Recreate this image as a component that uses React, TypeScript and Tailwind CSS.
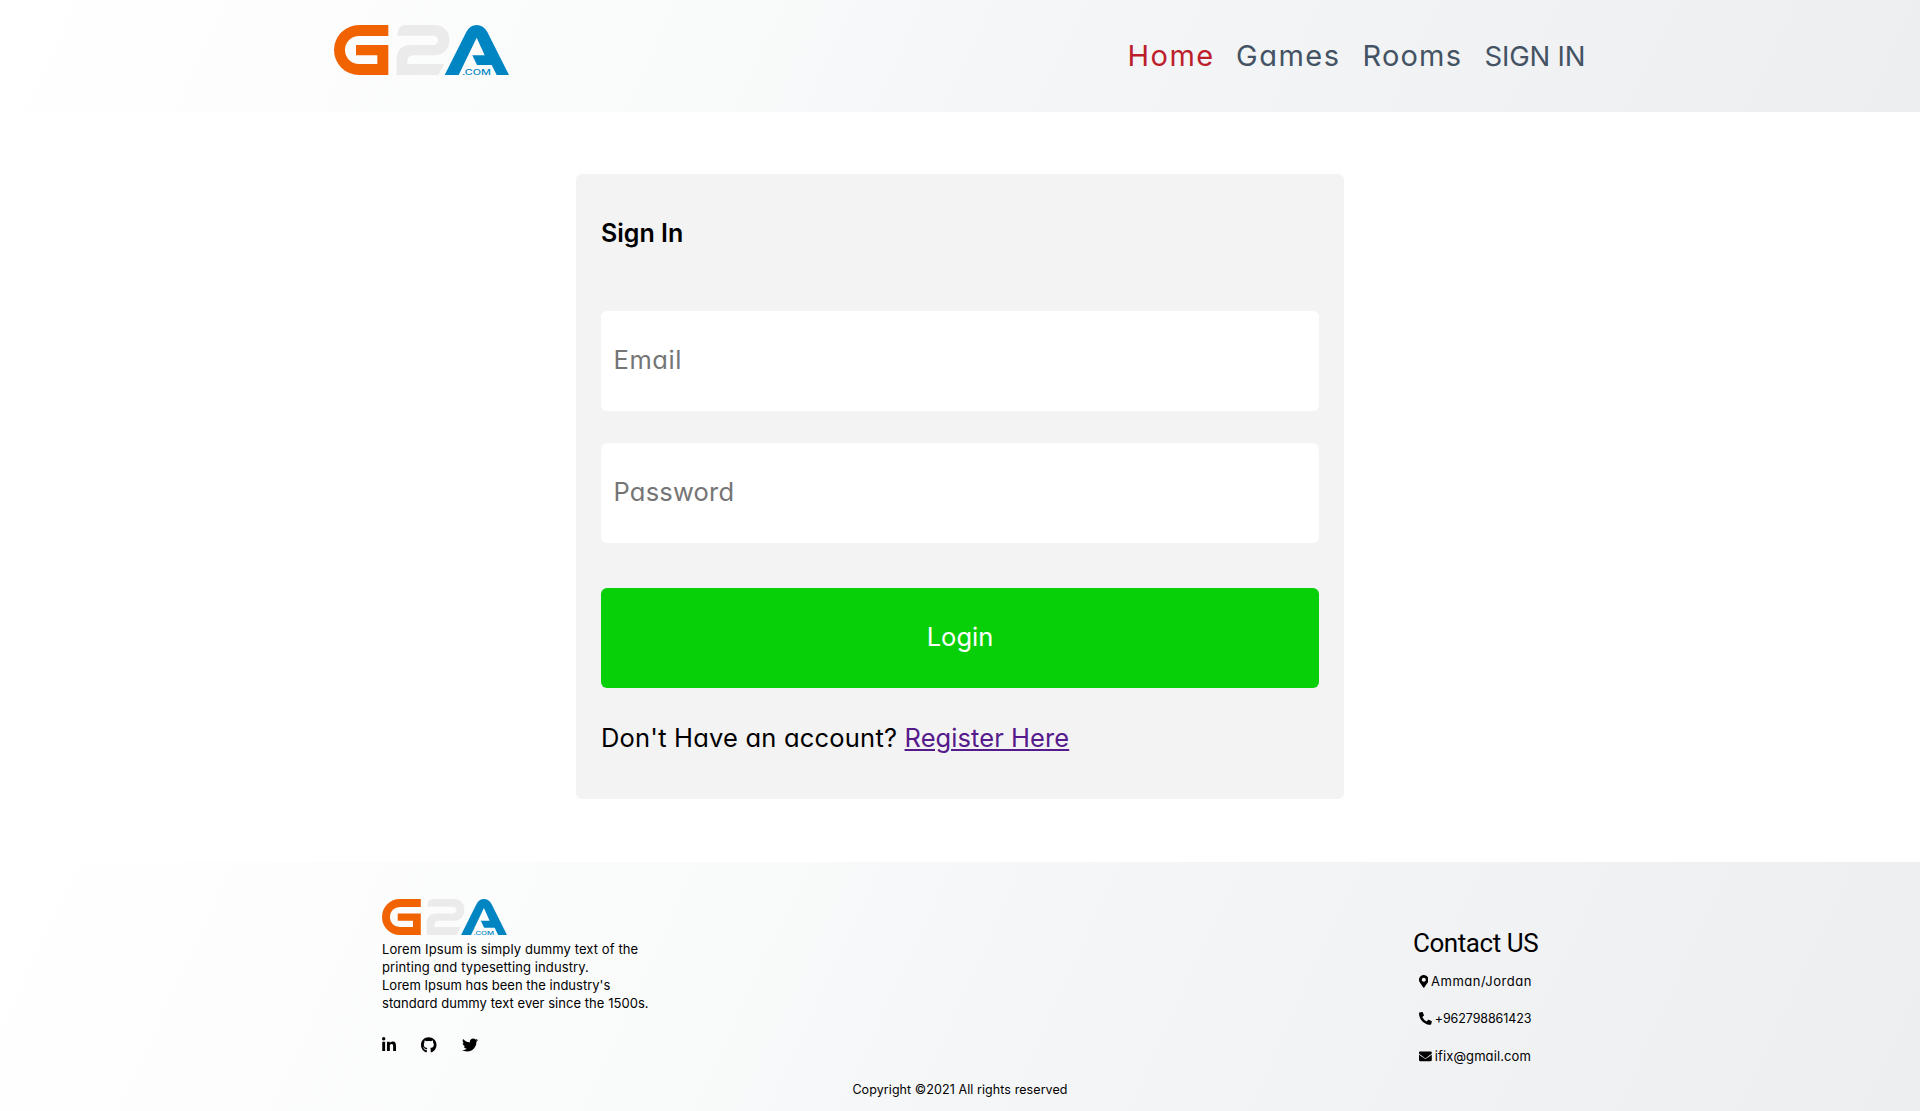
import { FaEnvelope, FaGithub, FaLinkedinIn, FaMapMarkerAlt, FaPhoneAlt, FaTwitter } from 'react-icons/fa';

function Logo({ className }: { className: string }) {
  return (
    <svg viewBox="0 0 525 150" preserveAspectRatio="none" className={`overflow-visible ${className}`} role="img" aria-label="G2A.com">
      <path fill="#f16300" d="M163 0H75a75 75 0 0 0 0 150H163V60H66V91H130V117H75a42 42 0 0 1 0-84H163Z" />
      <path
        fill="#ebebeb"
        d="M190 32C191 12 199 0 214 0H301C330 0 346 20 346 45S330 91 301 91H240Q220 91 220 109V117H331L313 150H188V102C188 76 203 60 229 60H298a14 14 0 0 0 0-28Z"
      />
      <path
        fill="#0085c3"
        d="M332 150L397 21Q408 0 428 0T460 21L525 150H488L473 120H429L415 91H452L428 38L374 150Z"
      />
      <text x="384" y="149" fontSize="21" fontWeight="500" fontFamily="Inter, sans-serif" fill="#0085c3" textLength="87" lengthAdjust="spacingAndGlyphs">
        .COM
      </text>
    </svg>
  );
}

const gradient = 'bg-[linear-gradient(115deg,#ffffff_0%,#f9fafa_38%,#f5f6f8_52%,#edeef0_100%)]';

export default function App() {
  return (
    <div className="flex h-[1111px] w-full flex-col overflow-hidden bg-white font-['Inter',sans-serif] text-black [font-feature-settings:'cv11']">
      <header className={`flex h-28 shrink-0 items-center pr-[334px] pl-[334px] ${gradient}`}>
        <Logo className="-mt-3 h-[50px] w-[175px]" />
        <nav className="ml-auto flex text-[29px] font-[370] whitespace-nowrap text-[#435363]">
          <a href="#" className="w-[108.5px] tracking-[1.5px] text-[#bd1e2c]">Home</a>
          <a href="#" className="w-[126.5px] tracking-[1.5px]">Games</a>
          <a href="#" className="w-[122px] tracking-[1.2px]">Rooms</a>
          <a href="#" className="w-[101.5px] text-[27.5px] leading-[44px] tracking-[-0.2px]">SIGN IN</a>
        </nav>
      </header>

      <main className="flex h-[750px] shrink-0 justify-center pt-[62px]">
        <form className="h-[625px] w-[768px] rounded-md bg-[#f3f3f3] px-[25px] text-[25.5px] font-[370]">
          <h1 className="pt-[39px] text-[25px] leading-10 font-semibold">Sign In</h1>
          <input
            type="email"
            placeholder="Email"
            className="mt-[58px] block h-[100px] w-full rounded-md bg-white px-[12.5px] pb-1 tracking-[0.6px] placeholder:text-[#757575]"
          />
          <input
            type="password"
            placeholder="Password"
            className="mt-8 block h-[100px] w-full rounded-md bg-white px-[12.5px] pb-[3px] tracking-[0.2px] placeholder:text-[#757575]"
          />
          <button type="button" className="mt-[45px] block h-[100px] w-full rounded-md bg-[#08d008] pb-px font-normal text-white">
            Login
          </button>
          <p className="mt-[30px] leading-10 whitespace-pre tracking-[0.2px]">
            Don't Have an account?{' '}
            <a href="#" className="tracking-[0.07px] text-[#551a8b] underline decoration-2 underline-offset-2">Register Here</a>
          </p>
        </form>
      </main>

      <footer className={`flex h-[249px] shrink-0 flex-col ${gradient}`}>
        <div className="flex h-[213px] justify-between pr-[382px] pl-[382px]">
          <div className="pt-[37px]">
            <Logo className="block h-9 w-[125px]" />
            <p className="mt-[5px] text-[13px] leading-[18px] tracking-[0.1px] whitespace-nowrap">
              Lorem Ipsum is simply dummy text of the
              <br />
              printing and typesetting industry.
              <br />
              <span className="tracking-[0.01px]">Lorem Ipsum has been the industry's</span>
              <br />
              <span className="tracking-[0.04px]">standard dummy text ever since the 1500s.</span>
            </p>
            <div className="mt-[25px] flex gap-[25px]">
              <FaLinkedinIn className="h-4 w-3.5" />
              <FaGithub className="h-4 w-[15.5px]" />
              <FaTwitter className="size-4" />
            </div>
          </div>
          <div className="w-[125px] pt-[63px] text-[13px] leading-[37.5px] whitespace-nowrap">
            <h2 className="font-['Roboto',sans-serif] text-[26px] font-[370] tracking-[-0.45px]">Contact US</h2>
            <div className="flex items-center gap-[3px] pl-[5.5px] tracking-[0.5px]">
              <FaMapMarkerAlt className="h-[12.8px] w-[9.6px]" />
              Amman/Jordan
            </div>
            <div className="flex items-center gap-[3px] pl-[6px] text-[12.5px] tracking-[-0.1px]">
              <FaPhoneAlt className="size-[12.8px]" />
              +962798861423
            </div>
            <div className="flex items-center gap-[3px] pl-[6px] tracking-[0.1px]">
              <FaEnvelope className="size-[12.8px]" />
              ifix@gmail.com
            </div>
          </div>
        </div>
        <p className="text-center text-[12.5px] leading-[30px] tracking-[0.08px]">Copyright ©2021 All rights reserved</p>
      </footer>
    </div>
  );
}
